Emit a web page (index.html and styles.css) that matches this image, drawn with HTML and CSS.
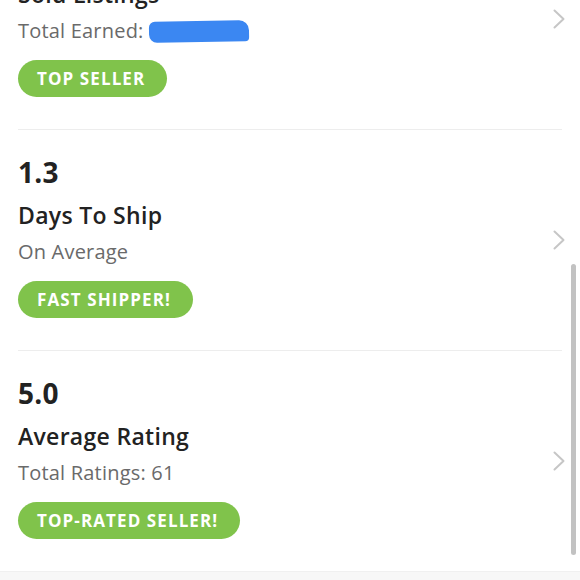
FILE: index.html
```html
<!DOCTYPE html>
<html>
<head>
<meta charset="utf-8">
<link rel="stylesheet" href="styles.css">
</head>
<body>
<div class="screen">
  <div class="list">
    <div class="row">
      <div class="info">
        <div class="num">27</div>
        <div class="title">Sold Listings</div>
        <div class="sub">Total Earned: <span class="scribble"></span></div>
        <span class="badge">TOP SELLER</span>
      </div>
      <svg class="chev" viewBox="0 0 12 20"><path d="M1.5 1.5 L10.5 10 L1.5 18.5" fill="none" stroke="#c6c6c6" stroke-width="2" stroke-linecap="round" stroke-linejoin="round"/></svg>
    </div>
    <div class="row">
      <div class="info">
        <div class="num">1.3</div>
        <div class="title">Days To Ship</div>
        <div class="sub">On Average</div>
        <span class="badge">FAST SHIPPER!</span>
      </div>
      <svg class="chev" viewBox="0 0 12 20"><path d="M1.5 1.5 L10.5 10 L1.5 18.5" fill="none" stroke="#c6c6c6" stroke-width="2" stroke-linecap="round" stroke-linejoin="round"/></svg>
    </div>
    <div class="row last">
      <div class="info">
        <div class="num">5.0</div>
        <div class="title">Average Rating</div>
        <div class="sub">Total Ratings: 61</div>
        <span class="badge">TOP-RATED SELLER!</span>
      </div>
      <svg class="chev" viewBox="0 0 12 20"><path d="M1.5 1.5 L10.5 10 L1.5 18.5" fill="none" stroke="#c6c6c6" stroke-width="2" stroke-linecap="round" stroke-linejoin="round"/></svg>
    </div>
  </div>
  <div class="footer"></div>
  <div class="scrollbar"></div>
</div>
</body>
</html>
```

FILE: styles.css
```css
* { box-sizing: border-box; }
html, body {
  margin: 0;
  padding: 0;
  background: #ffffff;
}
body {
  font-family: "Open Sans", "Lato", sans-serif;
  width: 580px;
  height: 580px;
  overflow: hidden;
}
.screen {
  position: relative;
  width: 580px;
  height: 580px;
  overflow: hidden;
}
.list {
  margin-top: -91px;
  padding-left: 18px;
  padding-right: 18px;
}
.row {
  display: flex;
  align-items: center;
  justify-content: space-between;
  height: 221px;
  padding: 25px 0 0 0;
  border-bottom: 1px solid #ededed;
}
.row.last {
  height: 220px;
  border-bottom: none;
}
.info {
  align-self: flex-start;
  display: flex;
  flex-direction: column;
  align-items: flex-start;
}
.num {
  font-size: 28px;
  line-height: 34px;
  font-weight: 700;
  color: #222222;
  letter-spacing: 0.2px;
}
.title {
  margin-top: 12px;
  font-size: 23px;
  line-height: 29px;
  font-weight: 600;
  color: #222222;
  letter-spacing: 0.3px;
}
.sub {
  margin-top: 9px;
  font-size: 20px;
  line-height: 26px;
  color: #6a6a6a;
  display: flex;
  align-items: center;
  letter-spacing: 0.2px;
}
.scribble {
  display: inline-block;
  width: 100px;
  height: 21px;
  margin-left: 5px;
  background: #3b87f2;
  border-radius: 6px 10px 4px 8px;
  transform: rotate(-1deg);
}
.badge {
  margin-top: 16px;
  display: inline-block;
  height: 37px;
  line-height: 37px;
  padding: 0 22px 0 19px;
  border-radius: 19px;
  background: #80c34b;
  color: #ffffff;
  font-size: 17px;
  font-weight: 700;
  letter-spacing: 1.1px;
}
.chev {
  width: 12px;
  height: 20px;
  margin-right: -3px;
  flex-shrink: 0;
  margin-top: -25px;
}
.footer {
  height: 20px;
  background: #f7f7f7;
  border-top: 1px solid #f0f0f0;
}
.scrollbar {
  position: absolute;
  left: 571px;
  top: 264px;
  width: 5px;
  height: 291px;
  border-radius: 3px;
  background: #c2c2c2;
}
```
